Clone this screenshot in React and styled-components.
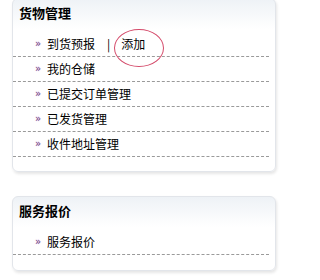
import React from "react";
import styled, { createGlobalStyle } from "styled-components";

const Global = createGlobalStyle`
  html, body { margin: 0; padding: 0; background: #fff; }
  body { font-family: "Noto Sans CJK SC", "Liberation Sans", sans-serif; font-size: 12px; color: #000; }
`;

const Page = styled.div`
  width: 284px;
  height: 280px;
  overflow: hidden;
  padding: 0 8px 0 12px;
  box-sizing: border-box;
  display: flex;
  flex-direction: column;
  gap: 24px;
`;

const Panel = styled.div`
  width: 264px;
  box-sizing: border-box;
  border: 1px solid #e2e5ea;
  border-radius: 6px;
  background: linear-gradient(#eef2f6 0px, #ffffff 30px);
  box-shadow: 1px 2px 3px rgba(0, 0, 0, 0.1);
  padding-bottom: ${(p) => p.$bottom}px;
  margin-top: ${(p) => p.$top}px;
`;

const Title = styled.div`
  height: 33px;
  padding: 6px 0 0 6px;
  box-sizing: border-box;
  font-size: 13px;
  font-weight: bold;
  line-height: 16px;
`;

const List = styled.ul`
  list-style: none;
  margin: 0 6px 0 0;
  padding: 0;
`;

const Row = styled.li`
  height: 25px;
  box-sizing: border-box;
  border-bottom: 1px dashed #9a9a9a;
  display: flex;
  align-items: center;
  padding-left: 22px;
  line-height: 24px;
`;

const Arrow = styled.span`
  color: #6b3f7d;
  font-size: 10px;
  width: 12px;
  font-family: "DejaVu Sans", sans-serif;
  text-shadow: 0 0 2px #f0c8f0;
`;

const Link = styled.span`
  position: relative;
`;

const Sep = styled.span`
  margin: 0 11px 0 12px;
`;

const Circle = styled.span`
  position: absolute;
  left: -7px;
  top: -3px;
  width: 50px;
  height: 38px;
  border: 1px solid #d44a6a;
  border-radius: 50%;
  box-sizing: border-box;
  pointer-events: none;
`;

function Item({ children }) {
  return (
    <Row>
      <Arrow>»</Arrow>
      {children}
    </Row>
  );
}

export default function App() {
  return (
    <>
      <Global />
      <Page>
        <Panel $top={-2} $bottom={14}>
          <Title>货物管理</Title>
          <List>
            <Item>
              <Link>到货预报</Link>
              <Sep>|</Sep>
              <Link>
                添加
                <Circle />
              </Link>
            </Item>
            <Item>
              <Link>我的仓储</Link>
            </Item>
            <Item>
              <Link>已提交订单管理</Link>
            </Item>
            <Item>
              <Link>已发货管理</Link>
            </Item>
            <Item>
              <Link>收件地址管理</Link>
            </Item>
          </List>
        </Panel>
        <Panel $top={0} $bottom={15}>
          <Title>服务报价</Title>
          <List>
            <Item>
              <Link>服务报价</Link>
            </Item>
          </List>
        </Panel>
      </Page>
    </>
  );
}
